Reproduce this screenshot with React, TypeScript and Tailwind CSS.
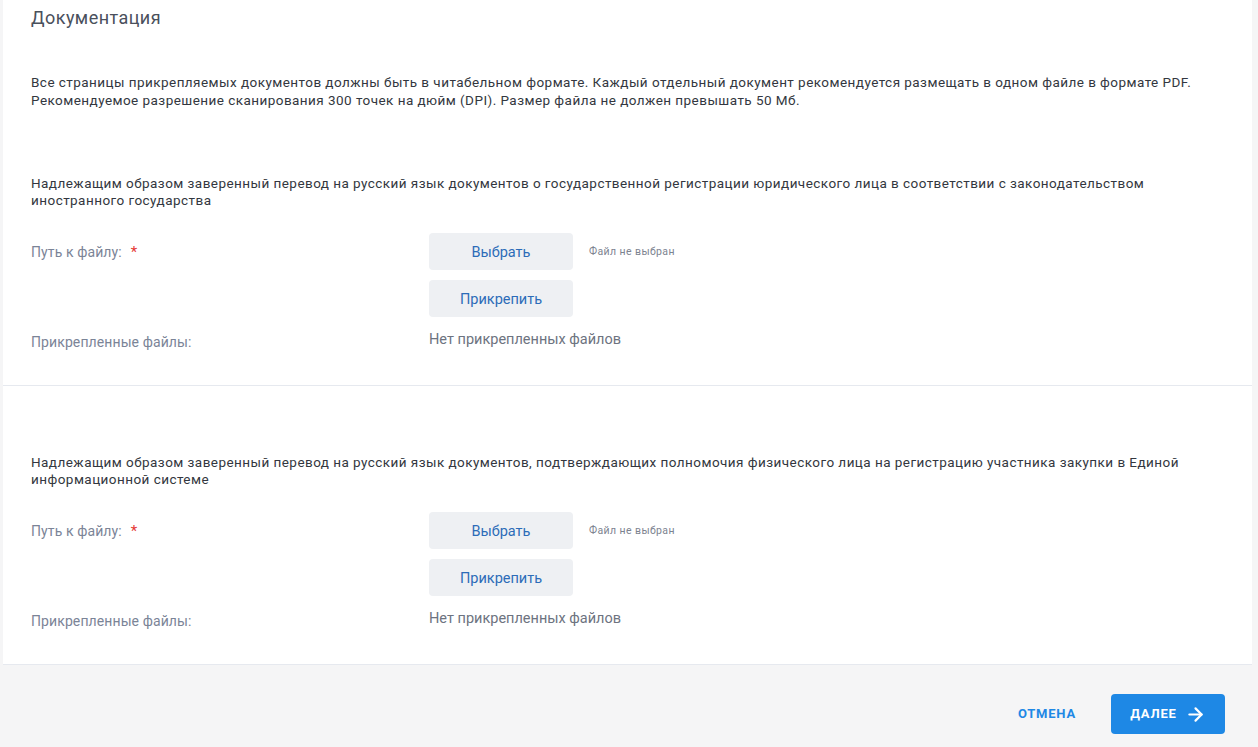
import { ArrowRight } from "lucide-react";

function FileSection({ title }: { title: string }) {
  return (
    <div className="px-[28px]">
      <p className="text-[13.5px] leading-[17px] tracking-[0.45px] text-[#333740] pr-[40px]">{title}</p>

      <div className="mt-[24px] grid grid-cols-[398px_1fr] gap-y-[10px]">
        <div className="flex items-center text-[14px] tracking-[0.1px] text-[#7b8497] pt-[2px]">
          Путь к файлу:
          <span className="ml-[9px] text-[#e53935] text-[15px]">*</span>
        </div>
        <div className="flex items-center">
          <button className="w-[144px] h-[37px] pt-[2px] rounded-[4px] bg-[#eef0f3] text-[14.5px] text-[#2c6cb8]">
            Выбрать
          </button>
          <span className="ml-[16px] text-[10.5px] tracking-[0.4px] text-[#7d8390]">Файл не выбран</span>
        </div>

        <div />
        <div>
          <button className="w-[144px] h-[37px] pt-[2px] rounded-[4px] bg-[#eef0f3] text-[14.5px] text-[#2c6cb8]">
            Прикрепить
          </button>
        </div>

        <div className="text-[14px] leading-[20px] tracking-[0.1px] text-[#7b8497] pt-[5px]">Прикрепленные файлы:</div>
        <div className="text-[14.5px] leading-[20px] text-[#6d7380] pt-[3px]">Нет прикрепленных файлов</div>
      </div>
    </div>
  );
}

export default function App() {
  return (
    <div
      className="h-[747px] bg-[#f5f5f6] flex flex-col"
      style={{ fontFamily: "Roboto, 'Liberation Sans', sans-serif" }}
    >
      <div className="mx-[3px] w-[1249px] bg-white border-b border-[#e6e9ef]">
        {/* Intro + first document */}
        <div className="pt-[7px] pb-[33px] border-b border-[#e6e9ef]">
          <div className="px-[28px]">
            <h1 className="text-[18px] leading-[22px] tracking-[0.45px] text-[#4a505c]">Документация</h1>
            <p className="mt-[44px] text-[13.5px] leading-[18px] tracking-[0.45px] text-[#333740]">
              Все страницы прикрепляемых документов должны быть в читабельном формате. Каждый отдельный документ
              рекомендуется размещать в одном файле в формате PDF.
              <br />
              Рекомендуемое разрешение сканирования 300 точек на дюйм (DPI). Размер файла не должен превышать 50 Мб.
            </p>
          </div>
          <div className="mt-[66px]">
            <FileSection title="Надлежащим образом заверенный перевод на русский язык документов о государственной регистрации юридического лица в соответствии с законодательством иностранного государства" />
          </div>
        </div>

        {/* Second document */}
        <div className="pt-[68px] pb-[33px]">
          <FileSection title="Надлежащим образом заверенный перевод на русский язык документов, подтверждающих полномочия физического лица на регистрацию участника закупки в Единой информационной системе" />
        </div>
      </div>

      {/* Footer actions */}
      <div className="flex-1 flex items-start justify-end pt-[29px] pr-[33px]">
        <button className="h-[40px] px-[8px] mr-[27px] text-[13px] font-bold tracking-[0.8px] text-[#1e88e5]">
          ОТМЕНА
        </button>
        <button className="h-[40px] w-[114px] rounded-[4px] bg-[#1e88e5] flex items-center justify-center gap-[8px] text-[13px] font-bold text-white tracking-[0.8px]">
          ДАЛЕЕ
          <ArrowRight size={21} strokeWidth={2.5} />
        </button>
      </div>
    </div>
  );
}
